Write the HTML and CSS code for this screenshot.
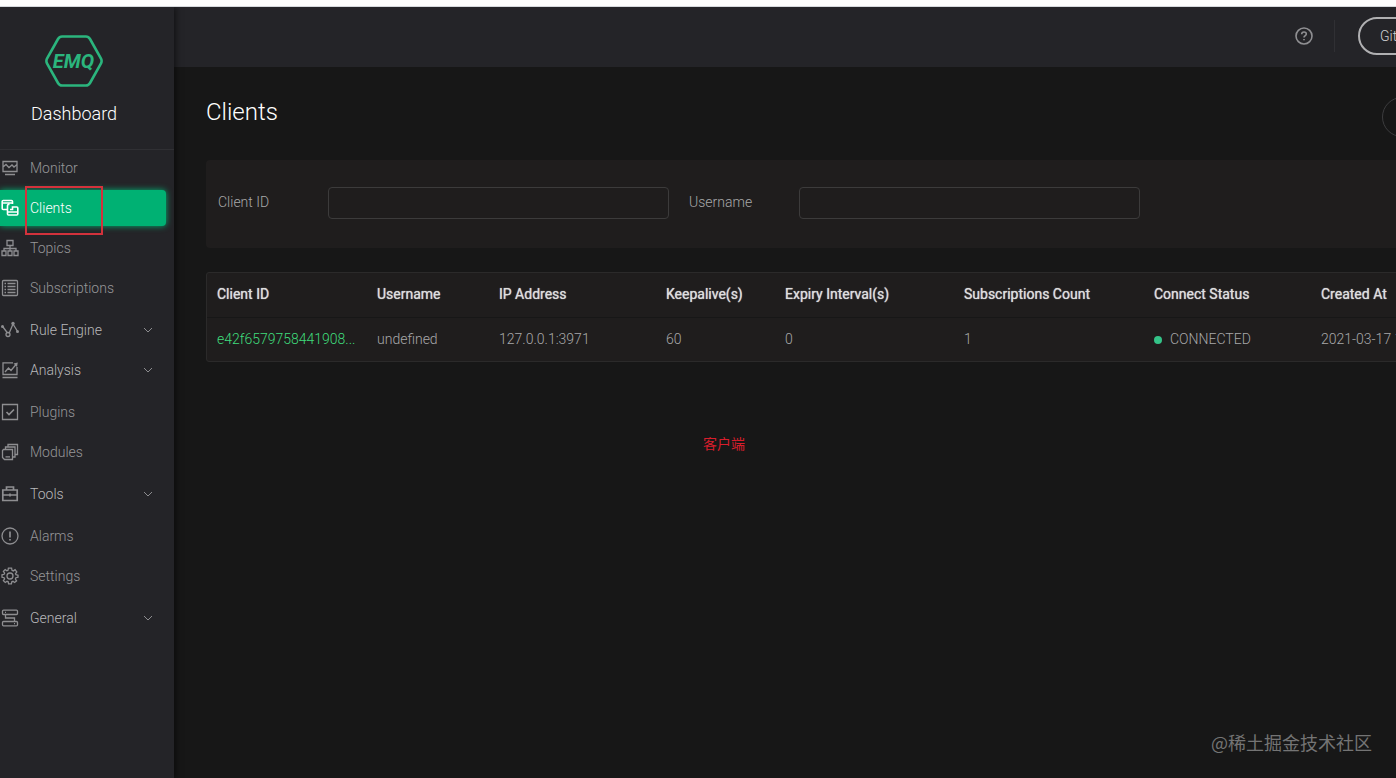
FILE: index.html
```html
<!DOCTYPE html>
<html lang="en">
<head>
    <meta charset="UTF-8">
    <meta name="viewport" content="width=device-width, initial-scale=1.0">
    <title>EMQ Dashboard - Clients</title>
    <link rel="stylesheet" href="styles.css">
</head>
<body>

<div class="window-edge"></div>
<div class="app">
    <aside class="sidebar">
        <div class="brand">
            <svg class="logo" viewBox="0 0 58 52" role="img" aria-label="EMQ">
                <path d="M17 1.5H41Q43.5 1.5 45 4L56 23.5Q57.2 26 56 28.5L45 48Q43.5 50.5 41 50.5H17Q14.5 50.5 13 48L2 28.5Q.8 26 2 23.5L13 4Q14.5 1.5 17 1.5Z" fill="none" stroke="#2bb57d" stroke-width="2.6"/>
                <text class="logo-text" x="28.5" y="33" text-anchor="middle">EMQ</text>
            </svg>
            <div class="brand-name">Dashboard</div>
        </div>
        <nav>
            <ul class="menu">
                <li class="item"><a href="#">
                    <svg class="icon" viewBox="0 0 18 18"><path d="M2 2.5H16V12.5H2ZM4 15.5H14M2 8L5 5.5L8 8.5L11 6L13 8L16 5.5"/></svg>
                    Monitor</a></li>
                <li class="item active"><a href="#">
                    <svg class="icon" viewBox="0 0 18 18"><path d="M6 10.5H2.2Q1.2 10.5 1.2 9.5V2.5Q1.2 1.5 2.2 1.5H10.5Q11.5 1.5 11.5 2.5V5M1.2 4H11.5M8.5 5.5H7.5Q6.5 5.5 6.5 6.5V15Q6.5 16 7.5 16H15.8Q16.8 16 16.8 15V9Q16.8 8 15.8 8H11.5V10.5H9M6.5 13H16.8"/></svg>
                    Clients</a></li>
                <li class="item"><a href="#">
                    <svg class="icon" viewBox="0 0 18 18"><path d="M6 1.5H12V6.5H6ZM9 6.5V12M3 12V9.5H15V12M1 12H5V16.5H1ZM7 12H11V16.5H7ZM13 12H17V16.5H13Z"/></svg>
                    Topics</a></li>
                <li class="item"><a href="#">
                    <svg class="icon" viewBox="0 0 18 18"><rect x="1.5" y="1.5" width="15" height="15" rx="1"/><path d="M3.5 4.5H5M6.5 4.5H14.500M3.5 7.5H5M6.5 7.5H14.5M3.5 10.5H5M6.5 10.5H14.5M3.5 13.5H5M6.5 13.5H14.5"/></svg>
                    Subscriptions</a></li>
                <li class="submenu"><a href="#">
                    <svg class="icon" viewBox="0 0 18 18"><path d="M2 6L6.5 12M8 12.5L12 3M12 3L16.3 10"/><circle cx="7" cy="13.5" r="2"/><g class="solid"><circle cx="1.5" cy="5.5" r="1.5"/><circle cx="12" cy="2.5" r="1.7"/><circle cx="16.5" cy="10.5" r="1.5"/></g></svg>
                    Rule Engine
                    <svg class="arrow" viewBox="0 0 12 12"><path d="M2 4L6 8L10 4"/></svg></a></li>
                <li class="submenu"><a href="#">
                    <svg class="icon" viewBox="0 0 18 18"><path d="M12 1.8H2V13.5H16V6M1.5 16.5H16.5M4 11L7.5 7L10 9.5L15 3.5"/><path class="solid" d="M12.5 2.5L16.8 1.5L16 6Z"/></svg>
                    Analysis
                    <svg class="arrow" viewBox="0 0 12 12"><path d="M2 4L6 8L10 4"/></svg></a></li>
                <li class="item"><a href="#">
                    <svg class="icon" viewBox="0 0 18 18"><path d="M1.5 1.5H16.5V16.5H1.5Z"/><path class="thick" d="M5.5 9L8 11.5L13 6.5"/></svg>
                    Plugins</a></li>
                <li class="item"><a href="#">
                    <svg class="icon" viewBox="0 0 18 18"><path d="M2.5 6.5H11.5V16.5H3.5L1.5 14.5V7.5ZM4.5 6.5V4H14V14H11.5M7 4V1.5H16.5V11.5H14M4.5 13.8H9"/></svg>
                    Modules</a></li>
                <li class="submenu"><a href="#">
                    <svg class="icon" viewBox="0 0 18 18"><path class="thick" d="M1.8 5H16.2V15.5H1.8ZM5.5 5V2H12.5V5M2 10H16M9 8.5V11.5"/></svg>
                    Tools
                    <svg class="arrow" viewBox="0 0 12 12"><path d="M2 4L6 8L10 4"/></svg></a></li>
                <li class="item"><a href="#">
                    <svg class="icon" viewBox="0 0 18 18"><circle cx="9" cy="9" r="8"/><path class="thick" d="M9 4.5V10.5M9 12V13.5"/></svg>
                    Alarms</a></li>
                <li class="item"><a href="#">
                    <svg class="icon" viewBox="0 0 18 18"><circle cx="9" cy="9" r="3"/><path d="M7.4 1.2H10.6L11 3.3L12.3 3.9L14.1 2.7L15.8 5L14.5 6.6L14.9 7.7L17 8.2V10.3L14.9 10.7L14.4 12L15.6 13.8L13.6 15.5L12 14.3L10.8 14.8L10.4 16.8H7.6L7.2 14.8L6 14.3L4.3 15.5L2.4 13.6L3.6 12L3.1 10.7L1 10.3V7.8L3.1 7.3L3.6 6L2.4 4.4L4.2 2.6L5.9 3.8L7 3.3Z"/></svg>
                    Settings</a></li>
                <li class="submenu"><a href="#">
                    <svg class="icon" viewBox="0 0 18 18"><rect x="1.5" y="1.2" width="15" height="4.3" rx="1"/><rect x="1.5" y="12.5" width="15" height="4.3" rx="1"/><path d="M4.5 5.5V9H13.5V12.5M4 3.4H5M13 14.7H14"/></svg>
                    General
                    <svg class="arrow" viewBox="0 0 12 12"><path d="M2 4L6 8L10 4"/></svg></a></li>
            </ul>
        </nav>
        <div class="marker"></div>
    </aside>

    <main class="main">
        <header class="topbar">
            <button class="help" type="button" aria-label="Help">
                <svg viewBox="0 0 18 18"><circle cx="9" cy="9" r="8"/><path d="M6.7 7.2Q6.7 5 9 5Q11.3 5 11.3 7Q11.3 8 10.2 8.7Q9 9.4 9 10.6M9 12V13.3"/></svg>
            </button>
            <button class="github" type="button">GitHub</button>
        </header>

        <div class="content">
            <div class="page-head">
                <h1>Clients</h1>
                <select class="node-select" aria-label="Node">
                    <option>emqx@127.0.0.1</option>
                </select>
            </div>

            <form class="search-card">
                <div class="field">
                    <label for="clientId">Client ID</label>
                    <input type="text" id="clientId" name="clientId">
                </div>
                <div class="field">
                    <label for="username">Username</label>
                    <input type="text" id="username" name="username">
                </div>
            </form>

            <div class="table-card">
                <table>
                    <colgroup>
                        <col class="col-client">
                        <col class="col-user">
                        <col class="col-ip">
                        <col class="col-keepalive">
                        <col class="col-expiry">
                        <col class="col-subs">
                        <col class="col-status">
                        <col>
                    </colgroup>
                    <thead>
                        <tr>
                            <th>Client ID</th>
                            <th>Username</th>
                            <th>IP Address</th>
                            <th>Keepalive(s)</th>
                            <th>Expiry Interval(s)</th>
                            <th>Subscriptions Count</th>
                            <th>Connect Status</th>
                            <th>Created At</th>
                        </tr>
                    </thead>
                    <tbody>
                        <tr>
                            <td><a class="client-link" href="#">e42f6579758441908...</a></td>
                            <td>undefined</td>
                            <td>127.0.0.1:3971</td>
                            <td>60</td>
                            <td>0</td>
                            <td>1</td>
                            <td><span class="dot"></span>CONNECTED</td>
                            <td>2021-03-17 10:20:30</td>
                        </tr>
                    </tbody>
                </table>
            </div>
        </div>
    </main>
</div>

<div class="note" lang="zh">客户端</div>
<div class="watermark" lang="zh">@稀土掘金技术社区</div>

</body>
</html>
```

FILE: styles.css
```css
* {
    box-sizing: border-box;
}
body {
    position: relative;
    display: flex;
    flex-direction: column;
    min-height: 100vh;
    margin: 0;
    overflow-x: hidden;
    background-color: #171717;
    color: #a8a8a9;
    font-family: Roboto, "Noto Sans CJK SC", sans-serif;
    font-size: 14px;
    font-weight: 300;
    line-height: 20px;
}
a {
    color: inherit;
    text-decoration: none;
}
button, input, select {
    font: inherit;
    color: inherit;
}
.window-edge {
    position: relative;
    z-index: 2;
    height: 7px;
    background-color: #fdfdfd;
    border-bottom: 1px solid #d5d8dc;
}
.app {
    display: flex;
    flex: 1;
}

/* sidebar */
.sidebar {
    position: relative;
    z-index: 1;
    flex: 0 0 174px;
    background-color: #242428;
    box-shadow: 2px 0 6px rgba(0, 0, 0, 0.5);
}
.brand {
    display: flex;
    flex-direction: column;
    align-items: center;
    gap: 17px;
    height: 143px;
    padding: 28px 26px 0 0;
    border-bottom: 1px solid #303034;
}
.logo {
    width: 58px;
    height: 52px;
}
.logo-text {
    fill: #2bb57d;
    font-size: 20px;
    font-weight: 700;
    font-style: italic;
}
.brand-name {
    color: #fff;
    font-size: 18px;
}
.menu {
    margin: 0;
    padding: 0;
    list-style: none;
}
.menu a {
    display: flex;
    align-items: center;
    gap: 11px;
    height: 100%;
    padding: 0 20px 0 1px;
}
.item {
    height: 36px;
    margin: 4px 8px 4px 0;
    color: #969698;
}
.item:first-child {
    margin-top: 0;
}
.submenu {
    height: 40px;
    color: #b8b8ba;
}
.active {
    background-color: #00b173;
    border-radius: 0 4px 4px 0;
    box-shadow: 0 0 6px #00b173;
    color: #fff;
}
.icon {
    width: 18px;
    height: 18px;
    fill: none;
    stroke: #8e8e91;
    stroke-width: 1.3;
}
.active .icon {
    stroke: #fff;
    stroke-width: 1.6;
}
.icon .thick {
    stroke-width: 1.7;
}
.icon .solid {
    fill: #8e8e91;
    stroke: none;
}
.arrow {
    width: 12px;
    height: 12px;
    margin-left: auto;
    fill: none;
    stroke: #8c8c8f;
    stroke-width: 1;
}
.marker {
    position: absolute;
    top: 179px;
    left: 25px;
    width: 78px;
    height: 49px;
    border: 2px solid #d2323c;
    pointer-events: none;
}

/* the main area is wider than the window and runs out on the right */
.main {
    flex: 1;
    min-width: 0;
    margin-right: -259px;
}
.topbar {
    display: flex;
    align-items: center;
    justify-content: flex-end;
    height: 60px;
    padding: 0 187px 2px 0;
    background-color: #242428;
}
.help {
    display: flex;
    align-items: center;
    height: 32px;
    margin-right: 23px;
    padding: 0 21px 0 0;
    background: none;
    border: 0;
    border-right: 1px solid #303034;
}
.help svg {
    width: 18px;
    height: 18px;
    fill: none;
    stroke: #8f8f92;
    stroke-width: 1.6;
}
.github {
    width: 110px;
    height: 38px;
    padding: 0 20px;
    background: none;
    border: 2px solid #b0b0b2;
    border-radius: 20px;
    color: #d0d0d2;
    text-align: left;
}
.content {
    padding: 30px 32px;
}
.page-head {
    display: flex;
    justify-content: space-between;
    height: 63px;
}
h1 {
    margin: 0;
    color: #fff;
    font-size: 24px;
    font-weight: 300;
    line-height: 30px;
}
.node-select {
    width: 241px;
    height: 40px;
    padding: 0 20px;
    appearance: none;
    background: none;
    border: 1px solid #3c3c3e;
    border-radius: 20px;
}
.search-card {
    display: grid;
    grid-template-columns: repeat(3, 1fr);
    gap: 20px;
    padding: 27px 12px 29px;
    background-color: #1f1d1d;
    border-radius: 4px;
}
.field {
    display: flex;
    align-items: center;
}
.field label {
    flex: 0 0 110px;
    padding-bottom: 2px;
}
.field input {
    flex: 1;
    min-width: 0;
    height: 32px;
    padding: 0 12px;
    background: none;
    border: 1px solid #3c3b3b;
    border-radius: 4px;
}

/* clients table */
.table-card {
    margin-top: 24px;
    background-color: #1f1d1d;
    border: 1px solid #2b2a2a;
    border-radius: 3px;
}
table {
    width: 100%;
    table-layout: fixed;
    border-collapse: collapse;
}
th, td {
    height: 44px;
    padding: 0 10px;
    text-align: left;
    white-space: nowrap;
}
th {
    padding-bottom: 2px;
    color: #dededf;
    font-weight: 400;
    text-shadow: 0 0 1px #dededf;
    border-bottom: 1px solid #171717;
}
.col-client {
    width: 160px;
}
.col-user {
    width: 122px;
}
.col-ip {
    width: 167px;
}
.col-keepalive {
    width: 119px;
}
.col-expiry {
    width: 179px;
}
.col-subs {
    width: 190px;
}
.col-status {
    width: 167px;
}
.client-link {
    color: #3fdc7c;
}
.dot {
    display: inline-block;
    width: 8px;
    height: 8px;
    margin-right: 8px;
    background-color: #34c388;
    border-radius: 50%;
}

.note {
    position: absolute;
    top: 434px;
    left: 703px;
    color: #d81e2c;
    font-weight: 400;
}
.watermark {
    position: absolute;
    right: 24px;
    bottom: 26px;
    color: #747474;
    font-family: "Noto Sans CJK SC", sans-serif;
    font-size: 18px;
    font-weight: 400;
}
```
